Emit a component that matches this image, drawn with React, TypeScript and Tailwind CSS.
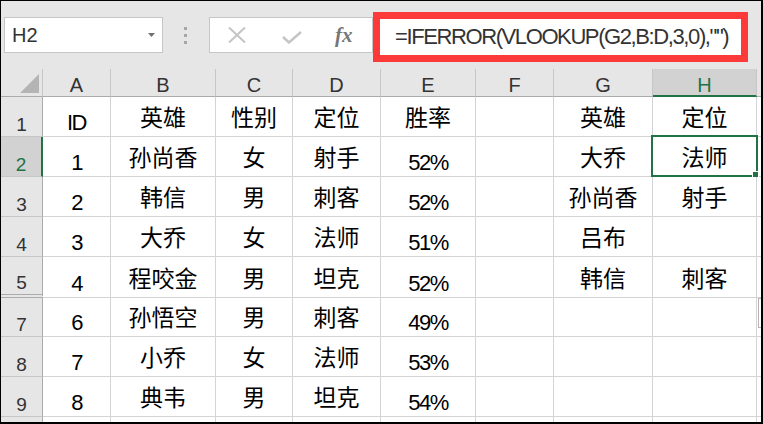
const FONT = "font-['Liberation_Sans','Noto_Sans_CJK_SC',sans-serif]";

const COLS = ['A', 'B', 'C', 'D', 'E', 'F', 'G', 'H'];
const GRID = 'grid grid-cols-[42px_68px_105px_77px_88px_95px_78px_99px_104px_1fr]';

type Row = { n: string; h: string; cells: string[]; double?: boolean };

const ROWS: Row[] = [
  { n: '1', h: 'h-[40px]', cells: ['ID', '英雄', '性别', '定位', '胜率', '', '英雄', '定位'] },
  { n: '2', h: 'h-[40px]', cells: ['1', '孙尚香', '女', '射手', '52%', '', '大乔', '法师'] },
  { n: '3', h: 'h-[40px]', cells: ['2', '韩信', '男', '刺客', '52%', '', '孙尚香', '射手'] },
  { n: '4', h: 'h-[40px]', cells: ['3', '大乔', '女', '法师', '51%', '', '吕布', ''] },
  { n: '5', h: 'h-[41px]', cells: ['4', '程咬金', '男', '坦克', '52%', '', '韩信', '刺客'], double: true },
  { n: '7', h: 'h-[39px]', cells: ['6', '孙悟空', '男', '刺客', '49%', '', '', ''] },
  { n: '8', h: 'h-[40px]', cells: ['7', '小乔', '女', '法师', '53%', '', '', ''] },
  { n: '9', h: 'h-[40px]', cells: ['8', '典韦', '男', '坦克', '54%', '', '', ''] },
];

const isCjk = (s: string) => /[\u4e00-\u9fff]/.test(s);

function DataCell({ value, selected }: { value: string; selected?: boolean }) {
  const cjk = isCjk(value);
  return (
    <div
      className={`relative flex items-end justify-center border-r border-b border-[#d4d4d4] bg-white leading-none text-black ${
        cjk ? 'pb-[6px] text-[23px]' : 'pb-[2px] text-[22px] tracking-[-1.5px]'
      }`}
    >
      {value}
      {selected && (
        <div className="absolute -left-[2px] -top-[2px] w-[107px] h-[42px] border-2 border-[#217346]">
          <div className="absolute -right-[3px] -bottom-[3px] w-[7px] h-[7px] bg-[#217346] border border-white" />
        </div>
      )}
    </div>
  );
}

export default function App() {
  return (
    <div
      className={`w-[763px] h-[424px] overflow-hidden border-t border-l border-r-2 border-b-2 border-black bg-white ${FONT}`}
    >
      {/* formula bar */}
      <div className="h-[68px] bg-[#e6e6e6] flex items-start">
        <div className="ml-[3px] mt-[16px] w-[159px] h-[36px] border border-[#c6c6c6] bg-white flex items-center pl-[7px] pr-[7px]">
          <span className="flex-1 text-[20px] leading-none text-[#333]">H2</span>
          <svg width="7" height="4" viewBox="0 0 7 4">
            <path d="M0 0H7L3.5 4Z" fill="#707070" />
          </svg>
        </div>
        <div className="ml-[21px] mt-[26px] flex flex-col gap-[4px]">
          <div className="w-[3px] h-[3px] bg-[#a6a6a6]" />
          <div className="w-[3px] h-[3px] bg-[#a6a6a6]" />
          <div className="w-[3px] h-[3px] bg-[#a6a6a6]" />
        </div>
        <div className="ml-[22px] mt-[16px] w-[164px] h-[36px] border border-[#c6c6c6] bg-white flex items-center">
          <svg className="ml-[18px]" width="18" height="16" viewBox="0 0 18 16">
            <path d="M1 0.5L17 15.5M17 0.5L1 15.5" stroke="#c4c4c4" strokeWidth="2" fill="none" />
          </svg>
          <svg className="ml-[36px] mt-[4px]" width="20" height="13" viewBox="0 0 20 13">
            <path d="M1 6L7 11.5L19 1" stroke="#c4c4c4" strokeWidth="2.4" fill="none" />
          </svg>
          <span className="ml-[33px] font-['Liberation_Serif',serif] italic font-bold text-[21px] leading-none text-[#777]">
            fx
          </span>
        </div>
        <div className="mt-[11px] w-[375px] h-[50px] border-[7px] border-[#fd3a3a] bg-white flex items-center pl-[15px]">
          <span className="text-[22px] leading-none tracking-[-1.4px] text-[#333]">=IFERROR(VLOOKUP(G2,B:D,3,0),"")</span>
        </div>
      </div>

      {/* column headers */}
      <div className={`${GRID} h-[28px] bg-[#e6e6e6]`}>
        <div className="border-r border-b border-r-[#c6c6c6] border-b-[#ababab] flex items-end justify-end pr-[3px] pb-[3px]">
          <svg width="19" height="19" viewBox="0 0 19 19">
            <path d="M19 0V19H0Z" fill="#b4b4b4" />
          </svg>
        </div>
        {COLS.map((c) =>
          c === 'H' ? (
            <div
              key={c}
              className="bg-[#d2d2d2] border-r border-r-[#c6c6c6] border-b-2 border-b-[#217346] flex items-end justify-center text-[20px] leading-none text-[#217346]"
            >
              {c}
            </div>
          ) : (
            <div
              key={c}
              className="border-r border-b border-r-[#c6c6c6] border-b-[#ababab] flex items-end justify-center pb-[1px] text-[20px] leading-none text-[#333]"
            >
              {c}
            </div>
          )
        )}
        <div className="border-b border-b-[#ababab]" />
      </div>

      {/* rows */}
      {ROWS.map((r) => (
        <div key={r.n} className={`${GRID} ${r.h}`}>
          <div
            className={`flex items-end justify-center pb-[2px] text-[19px] leading-none ${
              r.n === '2'
                ? 'bg-[#d2d2d2] text-[#217346] border-r-2 border-r-[#217346] border-b border-b-[#c6c6c6]'
                : r.double
                  ? 'bg-[#e6e6e6] text-[#333] border-r border-r-[#ababab] border-b-4 border-double border-b-[#ababab]'
                  : 'bg-[#e6e6e6] text-[#333] border-r border-r-[#ababab] border-b border-b-[#c6c6c6]'
            }`}
          >
            {r.n}
          </div>
          {r.cells.map((v, i) => (
            <DataCell key={i} value={v} selected={r.n === '2' && i === 7} />
          ))}
          <div className="border-b border-[#d4d4d4] bg-white">
            {r.n === '7' && <div className="ml-[1px] w-[4px] h-[30px] border border-[#b4b4b4] border-r-0" />}
          </div>
        </div>
      ))}

      {/* partial row 10 */}
      <div className={`${GRID} h-[8px]`}>
        <div className="bg-[#e6e6e6] border-r border-r-[#ababab]" />
        {COLS.map((c) => (
          <div key={c} className="border-r border-[#d4d4d4]" />
        ))}
        <div />
      </div>
    </div>
  );
}
